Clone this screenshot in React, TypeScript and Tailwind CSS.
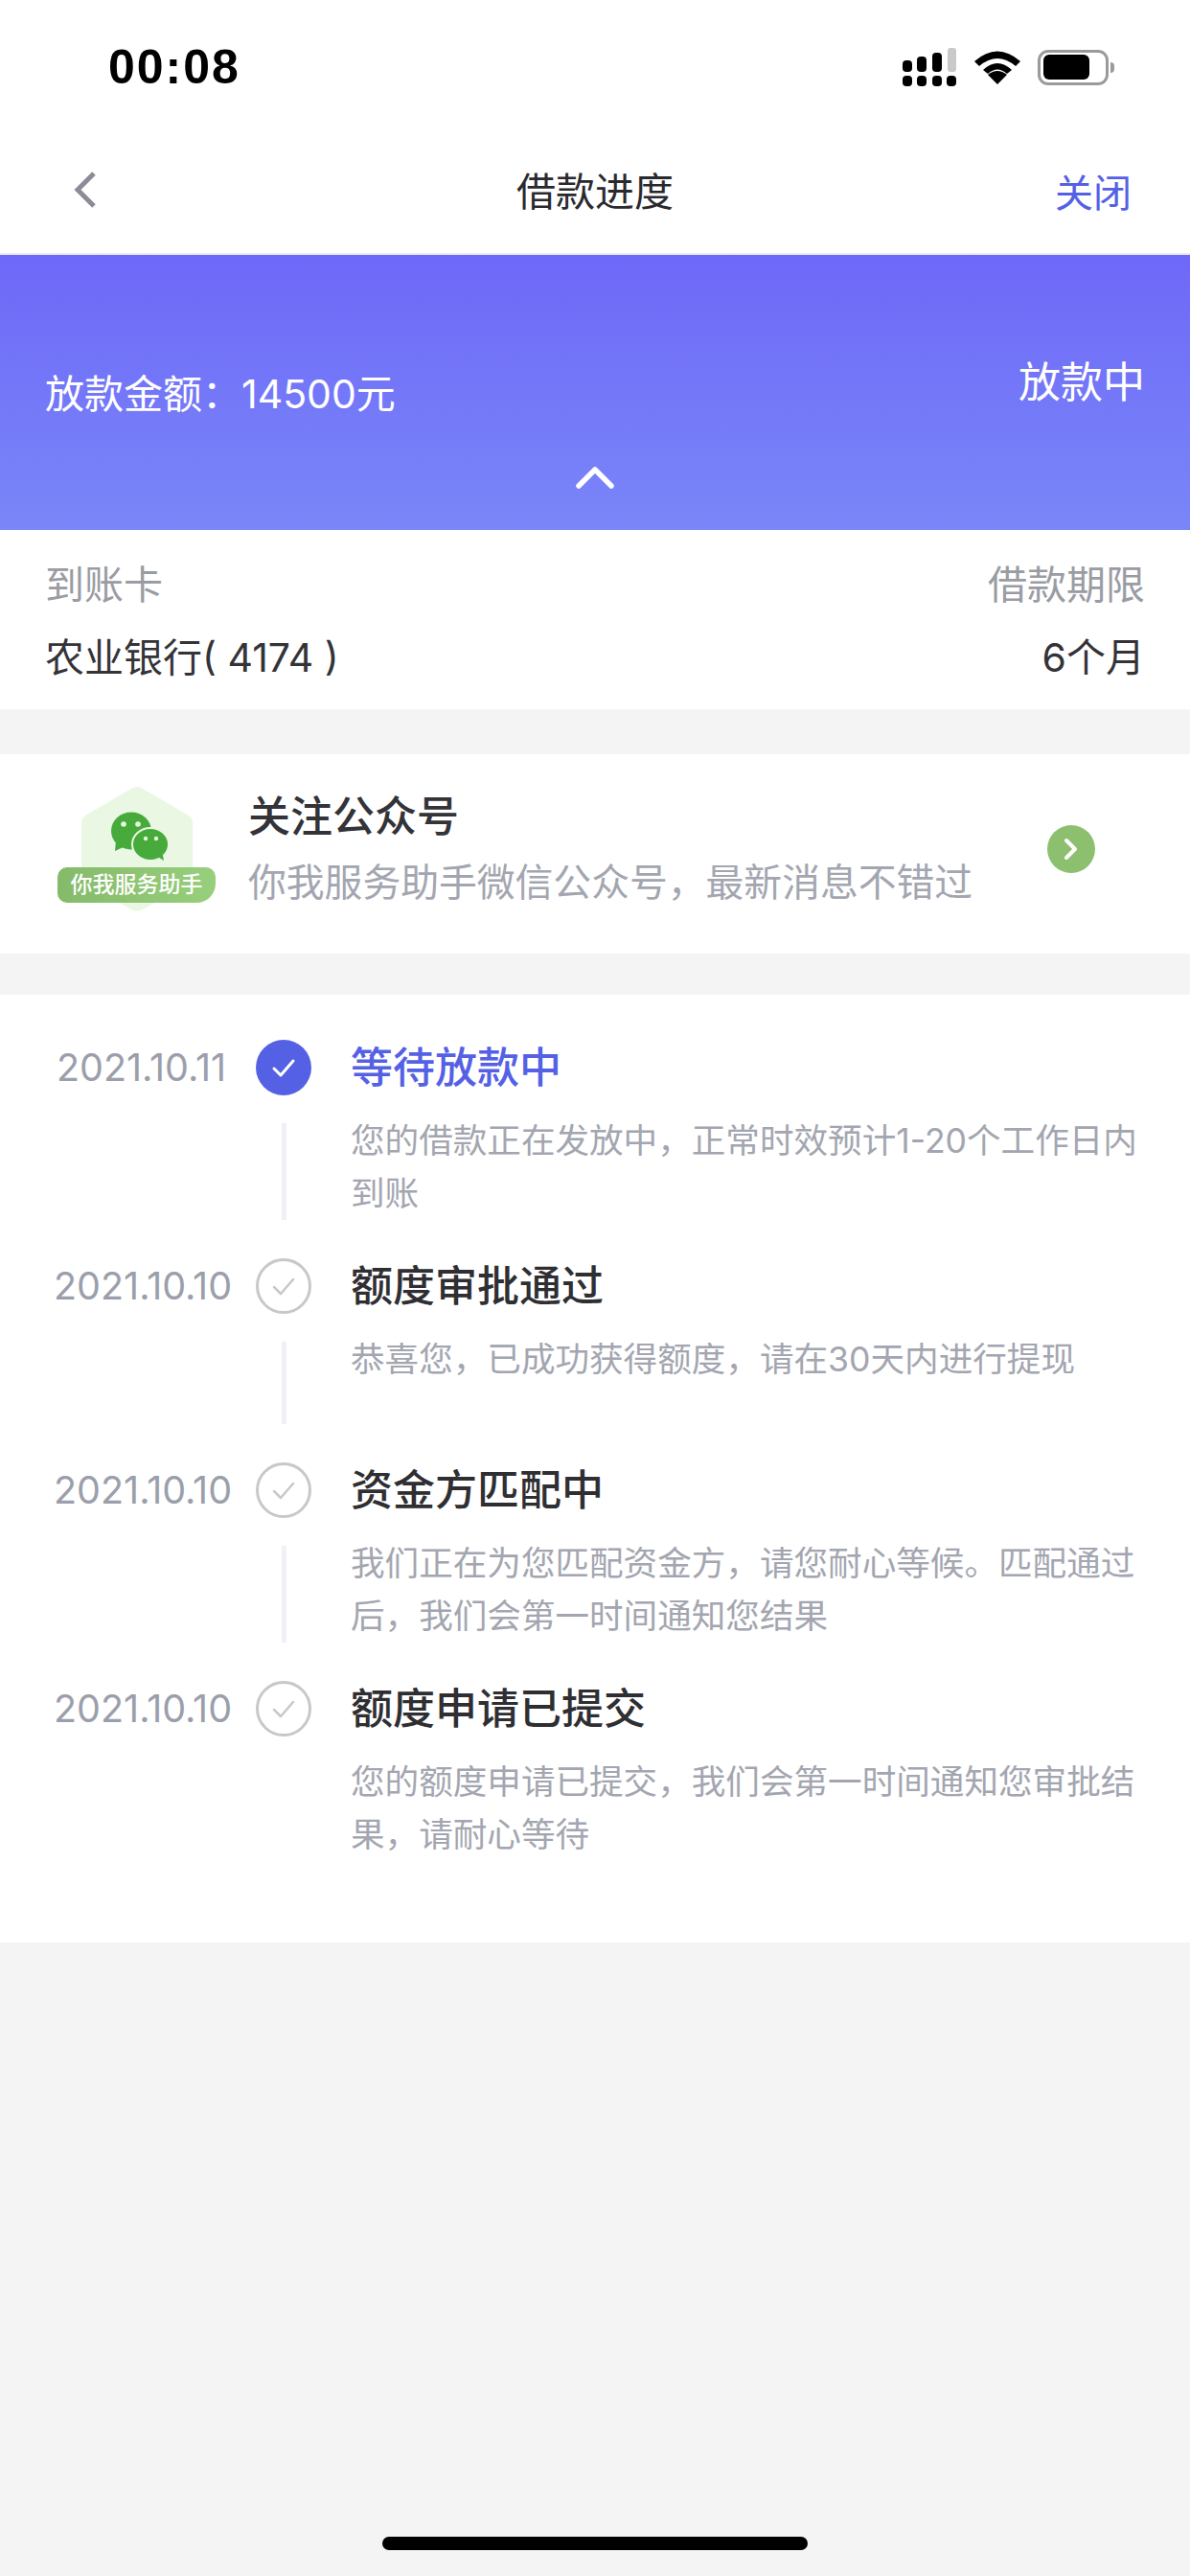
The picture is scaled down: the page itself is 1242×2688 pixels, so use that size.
const FONT_STACK = "font-['Inter','Noto_Sans_CJK_SC',sans-serif]";

interface Step {
  date: string;
  title: string;
  desc: string;
  active?: boolean;
}

const steps: Step[] = [
  {
    date: "2021.10.11",
    title: "等待放款中",
    desc: "您的借款正在发放中，正常时效预计1-20个工作日内到账",
    active: true,
  },
  {
    date: "2021.10.10",
    title: "额度审批通过",
    desc: "恭喜您，已成功获得额度，请在30天内进行提现",
  },
  {
    date: "2021.10.10",
    title: "资金方匹配中",
    desc: "我们正在为您匹配资金方，请您耐心等候。匹配通过后，我们会第一时间通知您结果",
  },
  {
    date: "2021.10.10",
    title: "额度申请已提交",
    desc: "您的额度申请已提交，我们会第一时间通知您审批结果，请耐心等待",
  },
];

function StatusIcons() {
  return (
    <div className="flex items-center">
      <svg width="58" height="40" viewBox="0 2 58 40">
        <rect x="1" y="15" width="10" height="12" rx="4" fill="#000" />
        <rect x="16" y="11" width="10" height="16" rx="4" fill="#000" />
        <rect x="32" y="7" width="10" height="20" rx="4" fill="#000" />
        <rect x="48" y="2" width="9" height="25" rx="3" fill="#c9c9c9" />
        <rect x="1" y="31" width="10" height="11" rx="4" fill="#000" />
        <rect x="16" y="31" width="10" height="11" rx="4" fill="#000" />
        <rect x="32" y="31" width="10" height="11" rx="4" fill="#000" />
        <rect x="47" y="31" width="10" height="11" rx="4" fill="#000" />
      </svg>
      <svg className="ml-[17px]" width="50" height="38" viewBox="0 0 50 38">
        <path d="M25 37 L15 27 Q25 19 35 27 Z" fill="#000" />
        <path d="M10 22 Q25 8 40 22 L35 26 Q25 17 15 26 Z" fill="#000" />
        <path d="M1 13 Q25 -8 49 13 L44 18 Q25 2 6 18 Z" fill="#000" />
      </svg>
      <div className="ml-[17px] flex items-center">
        <div className="flex h-[37px] w-[74px] items-center rounded-[11px] border-[3px] border-[#9a9a9a] pl-[3px]">
          <div className="h-[26px] w-[48px] rounded-[6px] bg-black" />
        </div>
        <div className="ml-[2px] h-[11px] w-[4px] rounded-r-full bg-[#9a9a9a]" />
      </div>
    </div>
  );
}

function ServiceLogo() {
  return (
    <div className="relative h-[134px] w-[166px] shrink-0">
      <svg className="absolute left-[23px] top-0" width="120" height="134" viewBox="0 0 120 134">
        <path
          d="M60 2 Q63 2 66 4 L114 32 Q118 35 118 39 L118 95 Q118 99 114 102 L66 130 Q60 133 54 130 L6 102 Q2 99 2 95 L2 39 Q2 35 6 32 L54 4 Q57 2 60 2 Z"
          fill="#e9f7e3"
        />
        <ellipse cx="54" cy="48" rx="21" ry="19.5" fill="#47ab3c" />
        <path d="M38 58 L37 69 L50 63 Z" fill="#47ab3c" />
        <ellipse cx="74" cy="62" rx="19" ry="17" fill="#47ab3c" stroke="#e9f7e3" strokeWidth="2" />
        <path d="M80 74 L88 79 L86 68 Z" fill="#47ab3c" />
        <circle cx="46" cy="41" r="2.8" fill="#e9f7e3" />
        <circle cx="61" cy="41" r="2.8" fill="#e9f7e3" />
        <circle cx="69" cy="56" r="2.2" fill="#e9f7e3" />
        <circle cx="80" cy="56" r="2.2" fill="#e9f7e3" />
      </svg>
      <div className="absolute left-0 top-[86px] flex h-[37px] w-[165px] items-center justify-center rounded-[10px] rounded-br-[20px] bg-gradient-to-r from-[#84ba69] to-[#98cf7d] text-[23px] font-medium leading-none text-white">
        你我服务助手
      </div>
    </div>
  );
}

function TimelineRow({ step, last }: { step: Step; last: boolean }) {
  return (
    <div className={last ? "flex" : "flex min-h-[213px] pb-[40px]"}>
      <div className="w-[183px] text-center text-[39.5px] leading-[58px] text-[#9b9fab]">
        {step.date}
      </div>
      <div className="ml-[28px] flex w-[58px] flex-col items-center">
        {step.active ? (
          <div className="flex size-[58px] items-center justify-center rounded-full bg-[#5561e4]">
            <svg width="26" height="26" viewBox="0 0 26 26" fill="none">
              <path d="M3 14 L10 21 L23 6" stroke="#fff" strokeWidth="3" strokeLinecap="round" strokeLinejoin="round" />
            </svg>
          </div>
        ) : (
          <div className="flex size-[58px] items-center justify-center rounded-full border-[3px] border-[#c8c8cc]">
            <svg width="26" height="26" viewBox="0 0 26 26" fill="none">
              <path d="M3 14 L10 21 L23 6" stroke="#c8c8cc" strokeWidth="2.5" strokeLinecap="round" strokeLinejoin="round" />
            </svg>
          </div>
        )}
        {!last && <div className="mt-[29px] w-[5px] flex-1 bg-[#f0f0f8]" />}
      </div>
      <div className="ml-[41px] w-[830px]">
        <div
          className={
            step.active
              ? "text-[44px] font-medium leading-[58px] text-[#5561e4]"
              : "text-[44px] font-medium leading-[58px] text-[#2f2f33]"
          }
        >
          {step.title}
        </div>
        <p className="mt-[20px] text-[35.6px] leading-[55px] text-[#a3a6b0]">{step.desc}</p>
      </div>
    </div>
  );
}

export default function App() {
  return (
    <div className={`${FONT_STACK} flex min-h-[2688px] flex-col bg-[#f4f4f5]`}>
      {/* status bar */}
      <div className="flex h-[132px] items-start justify-between bg-white pl-[113px] pr-[79px] pt-[40px]">
        <span className="font-['Liberation_Sans',sans-serif] text-[50px] font-bold leading-[60px] tracking-[2px] text-black">
          00:08
        </span>
        <div className="pt-[10px]">
          <StatusIcons />
        </div>
      </div>

      {/* nav */}
      <div className="grid h-[134px] grid-cols-[1fr_auto_1fr] items-center border-b-2 border-[#ececec] bg-white px-[61px]">
        <svg className="ml-[15px]" width="26" height="40" viewBox="0 0 26 40" fill="none">
          <path d="M22 3 L5 20 L22 37" stroke="#8b8c96" strokeWidth="5" />
        </svg>
        <span className="mt-[4px] text-[41px] leading-[60px] text-[#2a2a2e]">借款进度</span>
        <span className="mt-[8px] text-right text-[40px] leading-[60px] text-[#5561e4]">关闭</span>
      </div>

      {/* amount header */}
      <div className="flex h-[287px] flex-col bg-gradient-to-b from-[#6e68f8] to-[#7a86f8] px-[47px] pt-[105px] text-white">
        <div className="flex items-start justify-between">
          <span className="mt-[15px] text-[41px] leading-[50px]">放款金额：14500元</span>
          <span className="text-[44px] leading-[56px]">放款中</span>
        </div>
        <div className="mt-[49px] flex justify-center">
          <svg width="42" height="26" viewBox="0 0 42 26" fill="none">
            <path d="M4 22 L21 5 L38 22" stroke="#fff" strokeWidth="5.5" strokeLinecap="round" strokeLinejoin="round" />
          </svg>
        </div>
      </div>

      {/* card + term */}
      <div className="flex h-[187px] flex-col justify-between bg-white px-[47px] pb-[29px] pt-[32px] text-[41px] leading-[50px]">
        <div className="flex justify-between text-[#9a9ca3]">
          <span>到账卡</span>
          <span>借款期限</span>
        </div>
        <div className="flex justify-between text-[#333338]">
          <span>农业银行( 4174 )</span>
          <span>6个月</span>
        </div>
      </div>

      {/* wechat card */}
      <div className="mt-[47px] flex h-[208px] items-center bg-white pb-[10px] pl-[60px] pr-[99px]">
        <ServiceLogo />
        <div className="ml-[33px] flex-1">
          <div className="-mt-[5px] text-[44px] font-medium leading-[60px] text-[#333338]">关注公众号</div>
          <div className="mt-[14px] text-[39.8px] leading-[50px] text-[#a3a6b0]">
            你我服务助手微信公众号，最新消息不错过
          </div>
        </div>
        <div className="flex size-[50px] shrink-0 items-center justify-center rounded-full bg-[#8cc06f]">
          <svg width="16" height="24" viewBox="0 0 16 24" fill="none">
            <path d="M3 3 L12 12 L3 21" stroke="#fff" strokeWidth="4" strokeLinecap="round" strokeLinejoin="round" />
          </svg>
        </div>
      </div>

      {/* timeline */}
      <div className="mt-[43px] bg-white pb-[85px] pl-[56px] pt-[47px]">
        {steps.map((step, i) => (
          <TimelineRow key={step.title} step={step} last={i === steps.length - 1} />
        ))}
      </div>

      {/* home indicator */}
      <div className="flex flex-1 flex-col items-center justify-end pb-[27px]">
        <div className="h-[14px] w-[444px] rounded-full bg-black" />
      </div>
    </div>
  );
}
